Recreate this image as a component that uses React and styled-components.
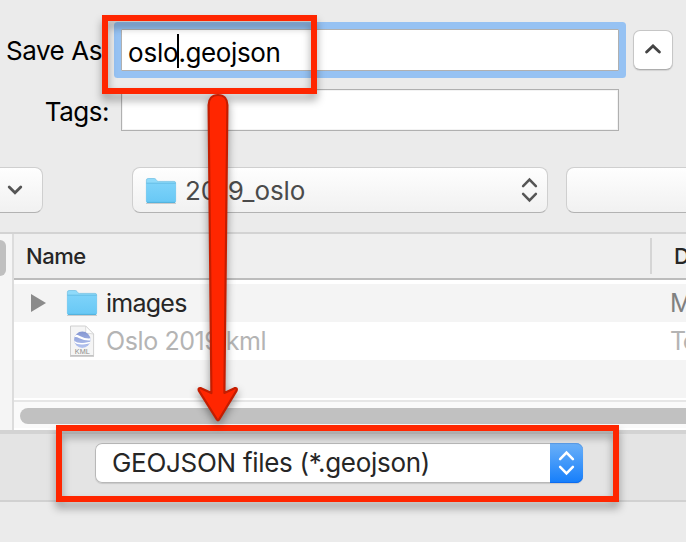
import React from "react";
import styled, { createGlobalStyle } from "styled-components";

const GlobalStyle = createGlobalStyle`
  *, *::before, *::after { box-sizing: border-box; }
  html, body { margin: 0; padding: 0; overflow: hidden; }
  body { background: #ebebeb; font-family: Inter, "Liberation Sans", sans-serif; color: #000; }
`;

const Dialog = styled.main`
  position: relative;
  display: flex;
  flex-direction: column;
  width: 686px;
  height: 542px;
  overflow: hidden;
  background: #ebebeb;
  font-size: 26px;
`;

const Text = styled.span`
  white-space: pre;
  line-height: 32px;
  font-size: ${(p) => p.$size || 26}px;
  letter-spacing: ${(p) => p.$track || 0}px;
  font-weight: ${(p) => p.$weight || 400};
  color: ${(p) => p.$color || "#000"};
`;

const Form = styled.section`
  display: flex;
  flex-direction: column;
  gap: 18px;
  padding-top: 29px;
  height: 167px;
`;

const FormRow = styled.div`
  display: flex;
  align-items: center;
  height: 42px;
`;

const Label = styled.label`
  display: flex;
  justify-content: flex-end;
  width: 109px;
  margin-right: 12px;
  padding-top: ${(p) => p.$drop || 0}px;
`;

const Field = styled.div`
  display: flex;
  align-items: center;
  width: 498px;
  height: 42px;
  padding: 5px 0 0 6px;
  background: #fff;
  border: 1px solid #b0b0b0;
  border-radius: ${(p) => (p.$focused ? "1px" : "0")};
  box-shadow: ${(p) => (p.$focused ? "0 0 0 7px #96c2f3" : "inset 0 0 0 1px #f3f3f3")};
`;

const Caret = styled.span`
  width: 2px;
  height: 34px;
  margin: -3px -1px 0;
  background: #000;
`;

const Disclosure = styled.button`
  display: flex;
  align-items: center;
  justify-content: center;
  width: 40px;
  height: 40px;
  margin-left: 14px;
  padding: 0 0 2px;
  background: #fff;
  border: 1px solid #c6c6c6;
  border-bottom-color: #adadad;
  border-radius: 7px;
  box-shadow: 0 1px 1px rgba(0, 0, 0, 0.1);
`;

const LocationBar = styled.div`
  display: flex;
  gap: 18px;
  height: 65px;
`;

const PopUp = styled.div`
  display: flex;
  align-items: center;
  flex: none;
  width: ${(p) => p.$width}px;
  height: 46px;
  margin-left: ${(p) => p.$offset || 0}px;
  padding: 0 9px 0 12px;
  background: linear-gradient(#fefefe, #f1f1f1);
  border: 1px solid #cfcfcf;
  border-bottom-color: #b2b2b2;
  border-radius: 8px;
  justify-content: ${(p) => (p.$end ? "flex-end" : "space-between")};
  padding-right: ${(p) => (p.$end ? 19 : 9)}px;
`;

const PopUpValue = styled.span`
  display: flex;
  align-items: center;
  gap: 8px;
  padding-top: 2px;
`;

const Browser = styled.section`
  display: flex;
  height: 198px;
  border-top: 2px solid #d3d3d3;
`;

const Sidebar = styled.aside`
  width: 14px;
  padding-top: 6px;
  background: #f5f5f5;
  border-right: 2px solid #dcdcdc;
`;

const SidebarThumb = styled.div`
  width: 6px;
  height: 36px;
  background: #bfbfbf;
  border-radius: 0 6px 6px 0;
`;

const FileList = styled.div`
  display: flex;
  flex-direction: column;
  flex: 1;
  background: #fff;
  min-width: 0;
`;

const Columns = styled.div`
  display: grid;
  grid-template-columns: 636px 36px;
  align-items: center;
  height: 46px;
  margin-bottom: 4px;
  background: #efefef;
  border-bottom: 2px solid #bcbcbc;
  overflow: hidden;
`;

const Column = styled.div`
  display: flex;
  align-items: center;
  height: 36px;
  padding-left: ${(p) => p.$inset}px;
  border-left: ${(p) => (p.$ruled ? "2px solid #d5d5d5" : "0")};
`;

const Row = styled.div`
  display: grid;
  grid-template-columns: 52px 40px 564px 16px;
  align-items: center;
  height: 38px;
  background: ${(p) => (p.$striped ? "#f4f4f4" : "#fff")};
  overflow: hidden;
`;

const Cell = styled.div`
  display: flex;
  align-items: center;
  padding-left: ${(p) => p.$inset || 0}px;
`;

const ScrollTrack = styled.div`
  height: 28px;
  margin-top: 2px;
  padding: 6px 0 0 6px;
  background: #fafafa;
  border-top: 2px solid #e6e6e6;
`;

const ScrollThumb = styled.div`
  height: 16px;
  background: #c1c1c1;
  border-radius: 8px 0 0 8px;
`;

const FormatBar = styled.section`
  display: flex;
  height: 72px;
  padding: 9px 0 0 95px;
  background: #e4e4e4;
  border-top: 4px solid #d3d3d3;
  border-bottom: 2px solid #d1d1d1;
`;

const FormatSelect = styled.div`
  display: flex;
  align-items: center;
  justify-content: space-between;
  width: 488px;
  height: 40px;
  padding-left: 17px;
  background: #fff;
  border-radius: 7px;
  box-shadow: inset 0 0 0 1px #b8b8b8, 0 1px 1px rgba(0, 0, 0, 0.12);
`;

const Stepper = styled.span`
  display: flex;
  align-items: center;
  justify-content: center;
  width: 33px;
  height: 40px;
  background: linear-gradient(#6cb1f8, #157efb);
  border-radius: 0 7px 7px 0;
  box-shadow: inset 0 1px 0 #5a9de8, inset 0 -1px 0 #0d6cf0;
`;

const Highlight = styled.div`
  position: absolute;
  left: ${(p) => p.$x}px;
  top: ${(p) => p.$y}px;
  width: ${(p) => p.$w}px;
  height: ${(p) => p.$h}px;
  border: 6px solid #ff2600;
  filter: drop-shadow(0 6px 4px rgba(0, 0, 0, 0.36));
`;

const Arrow = styled.svg`
  position: absolute;
  left: 188px;
  top: 86px;
  filter: drop-shadow(0 4px 4px rgba(0, 0, 0, 0.4));
`;

const Chevron = ({ up, color }) => (
  <svg width="16" height="10" viewBox="0 0 16 10" fill="none">
    <path
      d={up ? "M1.6 8.1 8 1.9l6.4 6.2" : "M2.2 2 8 7.8l5.8-5.8"}
      stroke={color}
      strokeWidth="2.8"
      strokeLinecap="round"
      strokeLinejoin="miter"
    />
  </svg>
);

const UpDown = ({ color }) => (
  <svg width="17" height="26" viewBox="0 0 17 26" fill="none">
    <path
      d="M2.1 9.2 8.5 2.6l6.4 6.6M2.1 16.8l6.4 6.6 6.4-6.6"
      stroke={color}
      strokeWidth="2.5"
      strokeLinecap="round"
    />
  </svg>
);

const Folder = () => (
  <svg width="32" height="28" viewBox="0 0 32 28">
    <defs>
      <linearGradient id="folderFront" x1="0" y1="0" x2="0" y2="1">
        <stop offset="0" stopColor="#7dd2f9" />
        <stop offset="1" stopColor="#68c8f5" />
      </linearGradient>
    </defs>
    <path d="M1 26.5h30" stroke="#000" strokeOpacity=".16" />
    <path
      d="M1.4 3.2q0-1.7 1.7-1.7h6.2q1 0 1.6.9l1 1.3q.5.7 1.4.7h15.8q1.5 0 1.5 1.5v18.3q0 1.3-1.3 1.3H2.7q-1.3 0-1.3-1.3z"
      fill="#8fdafa"
      stroke="#6bbde3"
      strokeWidth=".7"
    />
    <path d="M1.4 6.5h29.2v17.7q0 1.3-1.3 1.3H2.7q-1.3 0-1.3-1.3z" fill="url(#folderFront)" />
    <path d="M1.4 6.2h29.2" stroke="#5bb6df" strokeWidth=".8" />
    <path d="M2 25.4h28" stroke="#4caed9" strokeWidth=".9" />
  </svg>
);

const KmlIcon = () => (
  <svg width="26" height="34" viewBox="0 0 26 34">
    <defs>
      <linearGradient id="globe" x1="0" y1="0" x2="0" y2="1">
        <stop offset="0" stopColor="#8597d2" />
        <stop offset="1" stopColor="#b5c4f0" />
      </linearGradient>
      <clipPath id="globeClip"><circle cx="13.3" cy="15.8" r="8.2" /></clipPath>
    </defs>
    <path d="M1.5 2h15.2L24.6 10v21.5H1.5z" fill="#f5f5f5" stroke="#d0d0d0" />
    <path d="M1 32.1h24" stroke="#b0b0b0" />
    <path d="M16.6 2q.7 5.8-.6 7.5 4-.6 8.6.6z" fill="#fff" stroke="#d3d3d3" strokeWidth=".8" />
    <circle cx="13.3" cy="15.8" r="8.2" fill="url(#globe)" />
    <g clipPath="url(#globeClip)" fill="none" stroke="#fff" strokeLinecap="round">
      <path d="M5 12.2C9.5 10 12 16.6 21.5 15.4" strokeWidth="2.2" />
      <path d="M4.5 17.2C9 21 15 19.8 21.5 18.4" strokeWidth="1.5" />
    </g>
    <text x="13.3" y="29.6" textAnchor="middle" fontFamily="Liberation Sans, sans-serif" fontSize="6.6" fill="#8c8c8c" textLength="15" lengthAdjust="spacingAndGlyphs">KML</text>
  </svg>
);

export default function App() {
  return (
    <>
      <GlobalStyle />
      <Dialog>
        <Form>
          <FormRow>
            <Label $drop={2}><Text $track={-0.45}>Save As:</Text></Label>
            <Field $focused>
              <Text $track={-0.2}>oslo</Text>
              <Caret />
              <Text $track={-0.4}>.geojson</Text>
            </Field>
            <Disclosure aria-label="Collapse">
              <Chevron up color="#444" />
            </Disclosure>
          </FormRow>
          <FormRow>
            <Label $drop={4}><Text $track={-0.5}>Tags:</Text></Label>
            <Field />
          </FormRow>
        </Form>

        <LocationBar>
          <PopUp $width={53} $offset={-10} $end>
            <Chevron color="#555" />
          </PopUp>
          <PopUp $width={416} $offset={71}>
            <PopUpValue>
              <Folder />
              <Text $color="#4b4b4b" $track={-0.05}>2019_oslo</Text>
            </PopUpValue>
            <UpDown color="#555" />
          </PopUp>
          <PopUp $width={150} />
        </LocationBar>

        <Browser>
          <Sidebar><SidebarThumb /></Sidebar>
          <FileList>
            <Columns>
              <Column $inset={12}><Text $size={22} $weight={500} $color="#262626" $track={-0.5}>Name</Text></Column>
              <Column $inset={22} $ruled><Text $size={22} $weight={500} $color="#262626">D</Text></Column>
            </Columns>
            <Row $striped>
              <Cell $inset={17}>
                <svg width="15" height="18" viewBox="0 0 15 18"><path d="M0 0 15 9 0 18z" fill="#8b8b8b" /></svg>
              </Cell>
              <Cell><Folder /></Cell>
              <Cell><Text $size={25} $color="#262626" $track={-0.75}>images</Text></Cell>
              <Cell><Text $size={25} $color="#808080">M</Text></Cell>
            </Row>
            <Row>
              <Cell />
              <Cell $inset={3}><KmlIcon /></Cell>
              <Cell><Text $size={25} $color="#b4b4b4" $track={-0.4}>Oslo 2019.kml</Text></Cell>
              <Cell><Text $size={25} $color="#b4b4b4" $track={-1.5}>To</Text></Cell>
            </Row>
            <Row $striped />
            <ScrollTrack><ScrollThumb /></ScrollTrack>
          </FileList>
        </Browser>

        <FormatBar>
          <FormatSelect>
            <Text $color="#262626" $track={-0.29}>GEOJSON files (*.geojson)</Text>
            <Stepper><UpDown color="#fff" /></Stepper>
          </FormatSelect>
        </FormatBar>

        <Highlight $x={102} $y={14.5} $w={215} $h={79} />
        <Highlight $x={55.5} $y={425} $w={563} $h={77} />
        <Arrow width="60" height="350" viewBox="188 86 60 350">
          <path
            d="M208.6 105C208.6 99 212 95 218 95S227.4 99 227.4 105L224.4 393 234.5 388.2Q237.6 387.6 236.6 390.6L219 419.6Q218 421 217 419.6L198.8 390.6Q197.8 387.6 201 388.2L211.4 393Z"
            fill="#ff2600"
            stroke="#c41d00"
            strokeWidth="2.2"
            strokeLinejoin="round"
          />
        </Arrow>
      </Dialog>
    </>
  );
}
